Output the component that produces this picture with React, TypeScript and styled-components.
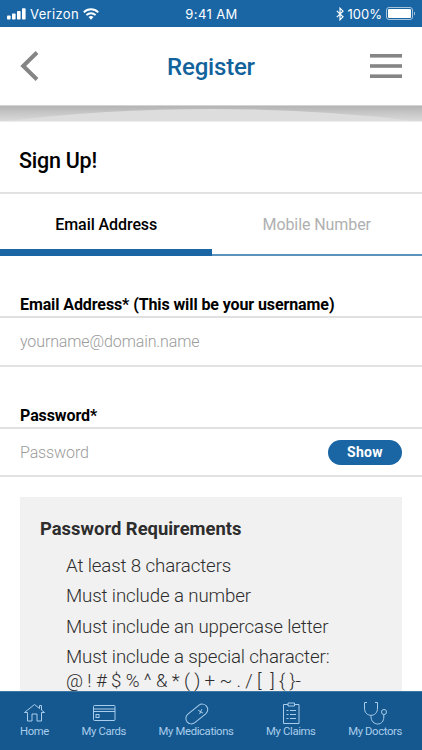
import { useState } from 'react';
import type { ReactNode } from 'react';

import styled, { createGlobalStyle } from 'styled-components';

const GlobalStyle = createGlobalStyle`
  * {
    box-sizing: border-box;
  }

  body {
    margin: 0;
    background: #ffffff;
    font-family: Roboto, sans-serif;
  }

  button {
    padding: 0;
    border: 0;
    background: none;
    font-family: inherit;
  }
`;

const Screen = styled.div`
  display: flex;
  flex-direction: column;
  width: 422px;
  height: 750px;
  overflow: hidden;
  background: #ffffff;
`;

const StatusBar = styled.div`
  display: grid;
  grid-template-columns: 1fr auto 1fr;
  align-items: center;
  flex: none;
  height: 27px;
  padding: 0 6px 0 7px;
  background: #1a66a5;
  color: #ffffff;
  font-family: Inter, sans-serif;
  font-size: 13px;
`;

const StatusGroup = styled.div<{ $end?: boolean }>`
  display: flex;
  align-items: center;
  justify-content: ${({ $end }) => ($end ? 'flex-end' : 'flex-start')};
  gap: 4px;
`;

const StatusText = styled.span<{ $spacing?: number }>`
  padding-top: 1px;
  letter-spacing: ${({ $spacing }) => $spacing || 0}px;
  line-height: 16px;
`;

const Header = styled.header`
  display: flex;
  align-items: center;
  justify-content: space-between;
  flex: none;
  height: 79px;
  padding: 0 20px;
  border-bottom: 1px solid #d4d4d4;
`;

const IconButton = styled.button`
  display: flex;
  width: 32px;
`;

const PageTitle = styled.h1`
  margin: 2px 0 0;
  color: #12639c;
  font-size: 24px;
  font-weight: 500;
  line-height: 28px;
  letter-spacing: -0.2px;
`;

const Banner = styled.div`
  flex: none;
  height: 16px;
  overflow: hidden;
  border-bottom: 1px solid #ececec;
`;

const Content = styled.main`
  flex: 1;
  min-height: 0;
  overflow: hidden;
`;

const SectionTitle = styled.h2`
  height: 72px;
  margin: 0;
  padding: 0 19px;
  border-bottom: 2px solid #e2e2e2;
  font-size: 21.5px;
  font-weight: 500;
  line-height: 77px;
  letter-spacing: -0.25px;
`;

const Tabs = styled.div`
  display: flex;
  height: 62px;
`;

const Tab = styled.button<{ $active: boolean }>`
  flex: 1;
  border-bottom: ${({ $active }) => ($active ? '7px solid #1a66a5' : '2px solid #5c93bd')};
  padding-top: ${({ $active }) => ($active ? 6 : 1)}px;
  padding-left: ${({ $active }) => ($active ? 1 : 0)}px;
  color: ${({ $active }) => ($active ? '#000000' : '#b0b0b0')};
  font-size: 16px;
  font-weight: ${({ $active }) => ($active ? 500 : 400)};
  line-height: 20px;
  letter-spacing: -0.08px;
`;

const Field = styled.label<{ $top: number }>`
  display: block;
  padding-top: ${({ $top }) => $top}px;
`;

const FieldLabel = styled.span`
  display: block;
  padding: 0 20px;
  color: #000000;
  font-size: 16px;
  font-weight: 700;
  line-height: 20px;
  letter-spacing: -0.1px;
`;

const FieldRow = styled.span`
  display: flex;
  align-items: center;
  height: 50.6px;
  margin-top: 1px;
  padding: 0 20px;
  border-top: 2px solid #e0e0e0;
  border-bottom: 2px solid #e2e2e2;
`;

const Input = styled.input`
  flex: 1;
  min-width: 0;
  padding: 0;
  border: 0;
  outline: 0;
  background: none;
  font-family: inherit;
  font-size: 16px;
  font-weight: 300;
  letter-spacing: -0.12px;

  &::placeholder {
    color: #9b9b9b;
  }
`;

const ShowButton = styled.button`
  width: 74px;
  height: 25px;
  border-radius: 13px;
  background: #1a66a5;
  color: #ffffff;
  font-size: 14px;
  font-weight: 700;
  letter-spacing: 0.3px;
`;

const Requirements = styled.section`
  height: 240px;
  margin: 19.6px 20px 0;
  padding: 20px;
  background: #f1f1f1;
  color: #2d2d2d;
`;

const RequirementsTitle = styled.h3`
  margin: 0 0 13px;
  font-size: 18.4px;
  font-weight: 700;
  line-height: 24px;
`;

const RequirementsList = styled.ul`
  display: flex;
  flex-direction: column;
  gap: 6.3px;
  margin: 0;
  padding: 0 0 0 26px;
  list-style: none;
  font-size: 18.7px;
  font-weight: 300;
  line-height: 24px;
  letter-spacing: -0.13px;
`;

const Symbols = styled.span`
  display: block;
  white-space: pre;
`;

const NavBar = styled.nav`
  display: flex;
  justify-content: space-between;
  flex: none;
  height: 59px;
  padding: 10px 20px 0;
  border-top: 1px solid #3d76a4;
  background: #14588f;
`;

const NavItem = styled.a`
  display: flex;
  align-items: center;
  flex-direction: column;
  gap: 1px;
  color: #a9cdec;
  font-size: 11.3px;
  line-height: 14px;
  letter-spacing: -0.36px;
  white-space: nowrap;

  svg {
    display: block;
    overflow: visible;
    fill: none;
    stroke: currentColor;
    stroke-width: 1;
  }
`;

const SignalIcon = () => (
  <svg width="19" height="12" viewBox="0 0 19 12" fill="#fff">
    <rect x="0" y="7.5" width="3.6" height="4" rx="0.8" />
    <rect x="5" y="5.5" width="3.6" height="6" rx="0.8" />
    <rect x="10" y="3" width="3.6" height="8.5" rx="0.8" />
    <rect x="15" y="0.3" width="3.6" height="11.2" rx="0.8" />
  </svg>
);

const WifiIcon = () => (
  <svg width="16" height="12" viewBox="0 0 16 12" fill="none" stroke="#fff" strokeWidth="1.9">
    <path d="M0.8 4.3a10.2 10.2 0 0 1 14.4 0" />
    <path d="M3.4 7.1a6.5 6.5 0 0 1 9.2 0" />
    <path d="M5.5 9.1a3.6 3.6 0 0 1 5 0L8 11.8z" fill="#fff" stroke="none" />
  </svg>
);

const BluetoothIcon = () => (
  <svg width="8" height="14" viewBox="0 0 8 14" fill="none" stroke="#fff" strokeWidth="1.2">
    <path d="M0.8 3.9 7 9.8 4 12.8V1.2l3 3L0.8 10.1" />
  </svg>
);

const BatteryIcon = () => (
  <svg width="30" height="13" viewBox="0 0 30 13">
    <rect x="0.5" y="0.5" width="26" height="12" rx="2.5" fill="none" stroke="#a8c5de" />
    <rect x="2" y="2" width="23" height="9" rx="1" fill="#fff" />
    <path d="M28 4.5v4c1.4-.6 1.4-3.4 0-4z" fill="#a8c5de" />
  </svg>
);

const BackIcon = () => (
  <svg width="20" height="30" viewBox="0 0 20 30" fill="none" stroke="#858585" strokeWidth="4">
    <path d="M17 1.5 3.2 15 17 28.5" />
  </svg>
);

const MenuIcon = () => (
  <svg width="32" height="24" viewBox="0 0 32 24" fill="#858585">
    <rect width="32" height="3.6" />
    <rect y="10.2" width="32" height="3.6" />
    <rect y="20.4" width="32" height="3.6" />
  </svg>
);

const HomeIcon = () => (
  <svg width="21" height="22" viewBox="0 0 21 22">
    <path d="M.5 10.5 10.500 2.500l5 4V3.500h2v4.600l3 2.400h-3v8.500h-4.500v-7h-5v7H3.500v-8.500z" />
  </svg>
);

const CardIcon = () => (
  <svg width="22" height="22" viewBox="0 0 22 22">
    <rect x="0.5" y="3.5" width="21.5" height="15" rx="1" />
    <path d="M.5 7h21.5M.5 9.5h21.5" />
    <rect x="3" y="12.5" width="3" height="3" />
  </svg>
);

const PillIcon = () => (
  <svg width="22" height="22" viewBox="0 0 22 22">
    <rect x="-0.7" y="6.5" width="25" height="11" rx="5.5" transform="rotate(-39 11.8 12)" />
    <path d="m13.2 8.3 4.8 2.8M16.8 7.2l-2.2 4.900" />
  </svg>
);

const ClipboardIcon = () => (
  <svg width="18" height="22" viewBox="0 0 18 22">
    <path d="M6 2.5H1.5v19H17v-19h-4.5" />
    <path d="M6 1h6.5v3H6z" />
    <path d="M4.5 8.5h2M8 8.5h6M4.5 12.5h2M8 12.5h6M4.5 16.5h2M8 16.5h6" />
  </svg>
);

const StethoscopeIcon = () => (
  <svg width="22" height="22" viewBox="0 0 22 22">
    <path d="M3 .5H.5V6c0 4.5 2.5 7.3 6.5 7.3s6.5-2.8 6.5-7.3V.5H11" />
    <path d="M7 13.3v1.2c0 4.5 3 7.5 6.8 7.5s6-3 6-7v-2.500" />
    <circle cx="20" cy="10" r="2.5" />
  </svg>
);

const navItems: { label: string; icon: ReactNode }[] = [
  { label: 'Home', icon: <HomeIcon /> },
  { label: 'My Cards', icon: <CardIcon /> },
  { label: 'My Medications', icon: <PillIcon /> },
  { label: 'My Claims', icon: <ClipboardIcon /> },
  { label: 'My Doctors', icon: <StethoscopeIcon /> },
];

const tabs = ['Email Address', 'Mobile Number'];

const App = () => {
  const [activeTab, setActiveTab] = useState(tabs[0]);
  const [visible, setVisible] = useState(false);

  return (
    <Screen>
      <GlobalStyle />
      <StatusBar>
        <StatusGroup>
          <SignalIcon />
          <StatusText $spacing={0.35}>Verizon</StatusText>
          <WifiIcon />
        </StatusGroup>
        <StatusText $spacing={0.4}>9:41 AM</StatusText>
        <StatusGroup $end>
          <BluetoothIcon />
          <StatusText>100%</StatusText>
          <BatteryIcon />
        </StatusGroup>
      </StatusBar>
      <Header>
        <IconButton aria-label="Back">
          <BackIcon />
        </IconButton>
        <PageTitle>Register</PageTitle>
        <IconButton aria-label="Menu">
          <MenuIcon />
        </IconButton>
      </Header>
      <Banner>
        <svg width="422" height="16" viewBox="0 0 422 16">
          <defs>
            <linearGradient id="shade" x2="0" y2="1">
              <stop offset="0" stopColor="#b4b4b4" />
              <stop offset="0.5" stopColor="#c9c9c9" />
              <stop offset="1" stopColor="#dcdcdc" />
            </linearGradient>
          </defs>
          <rect width="422" height="16" fill="url(#shade)" />
          <path d="M0 16Q100 3 211 3T422 16z" fill="#dddddd" />
        </svg>
      </Banner>
      <Content>
        <SectionTitle>Sign Up!</SectionTitle>
        <Tabs>
          {tabs.map((tab) => (
            <Tab key={tab} $active={tab === activeTab} onClick={() => setActiveTab(tab)}>
              {tab}
            </Tab>
          ))}
        </Tabs>
        <Field $top={39}>
          <FieldLabel>Email Address* (This will be your username)</FieldLabel>
          <FieldRow>
            <Input type="email" placeholder="yourname@domain.name" />
          </FieldRow>
        </Field>
        <Field $top={39.2}>
          <FieldLabel>Password*</FieldLabel>
          <FieldRow>
            <Input type={visible ? 'text' : 'password'} placeholder="Password" />
            <ShowButton onClick={() => setVisible(!visible)}>Show</ShowButton>
          </FieldRow>
        </Field>
        <Requirements>
          <RequirementsTitle>Password Requirements</RequirementsTitle>
          <RequirementsList>
            <li>At least 8 characters</li>
            <li>Must include a number</li>
            <li>Must include an uppercase letter</li>
            <li>
              Must include a special character:
              <Symbols>{'@ ! # $ % ^ & * ( ) + ~ . / [  ] { }-'}</Symbols>
            </li>
          </RequirementsList>
        </Requirements>
      </Content>
      <NavBar>
        {navItems.map(({ label, icon }) => (
          <NavItem key={label}>
            {icon}
            {label}
          </NavItem>
        ))}
      </NavBar>
    </Screen>
  );
};

export default App;
